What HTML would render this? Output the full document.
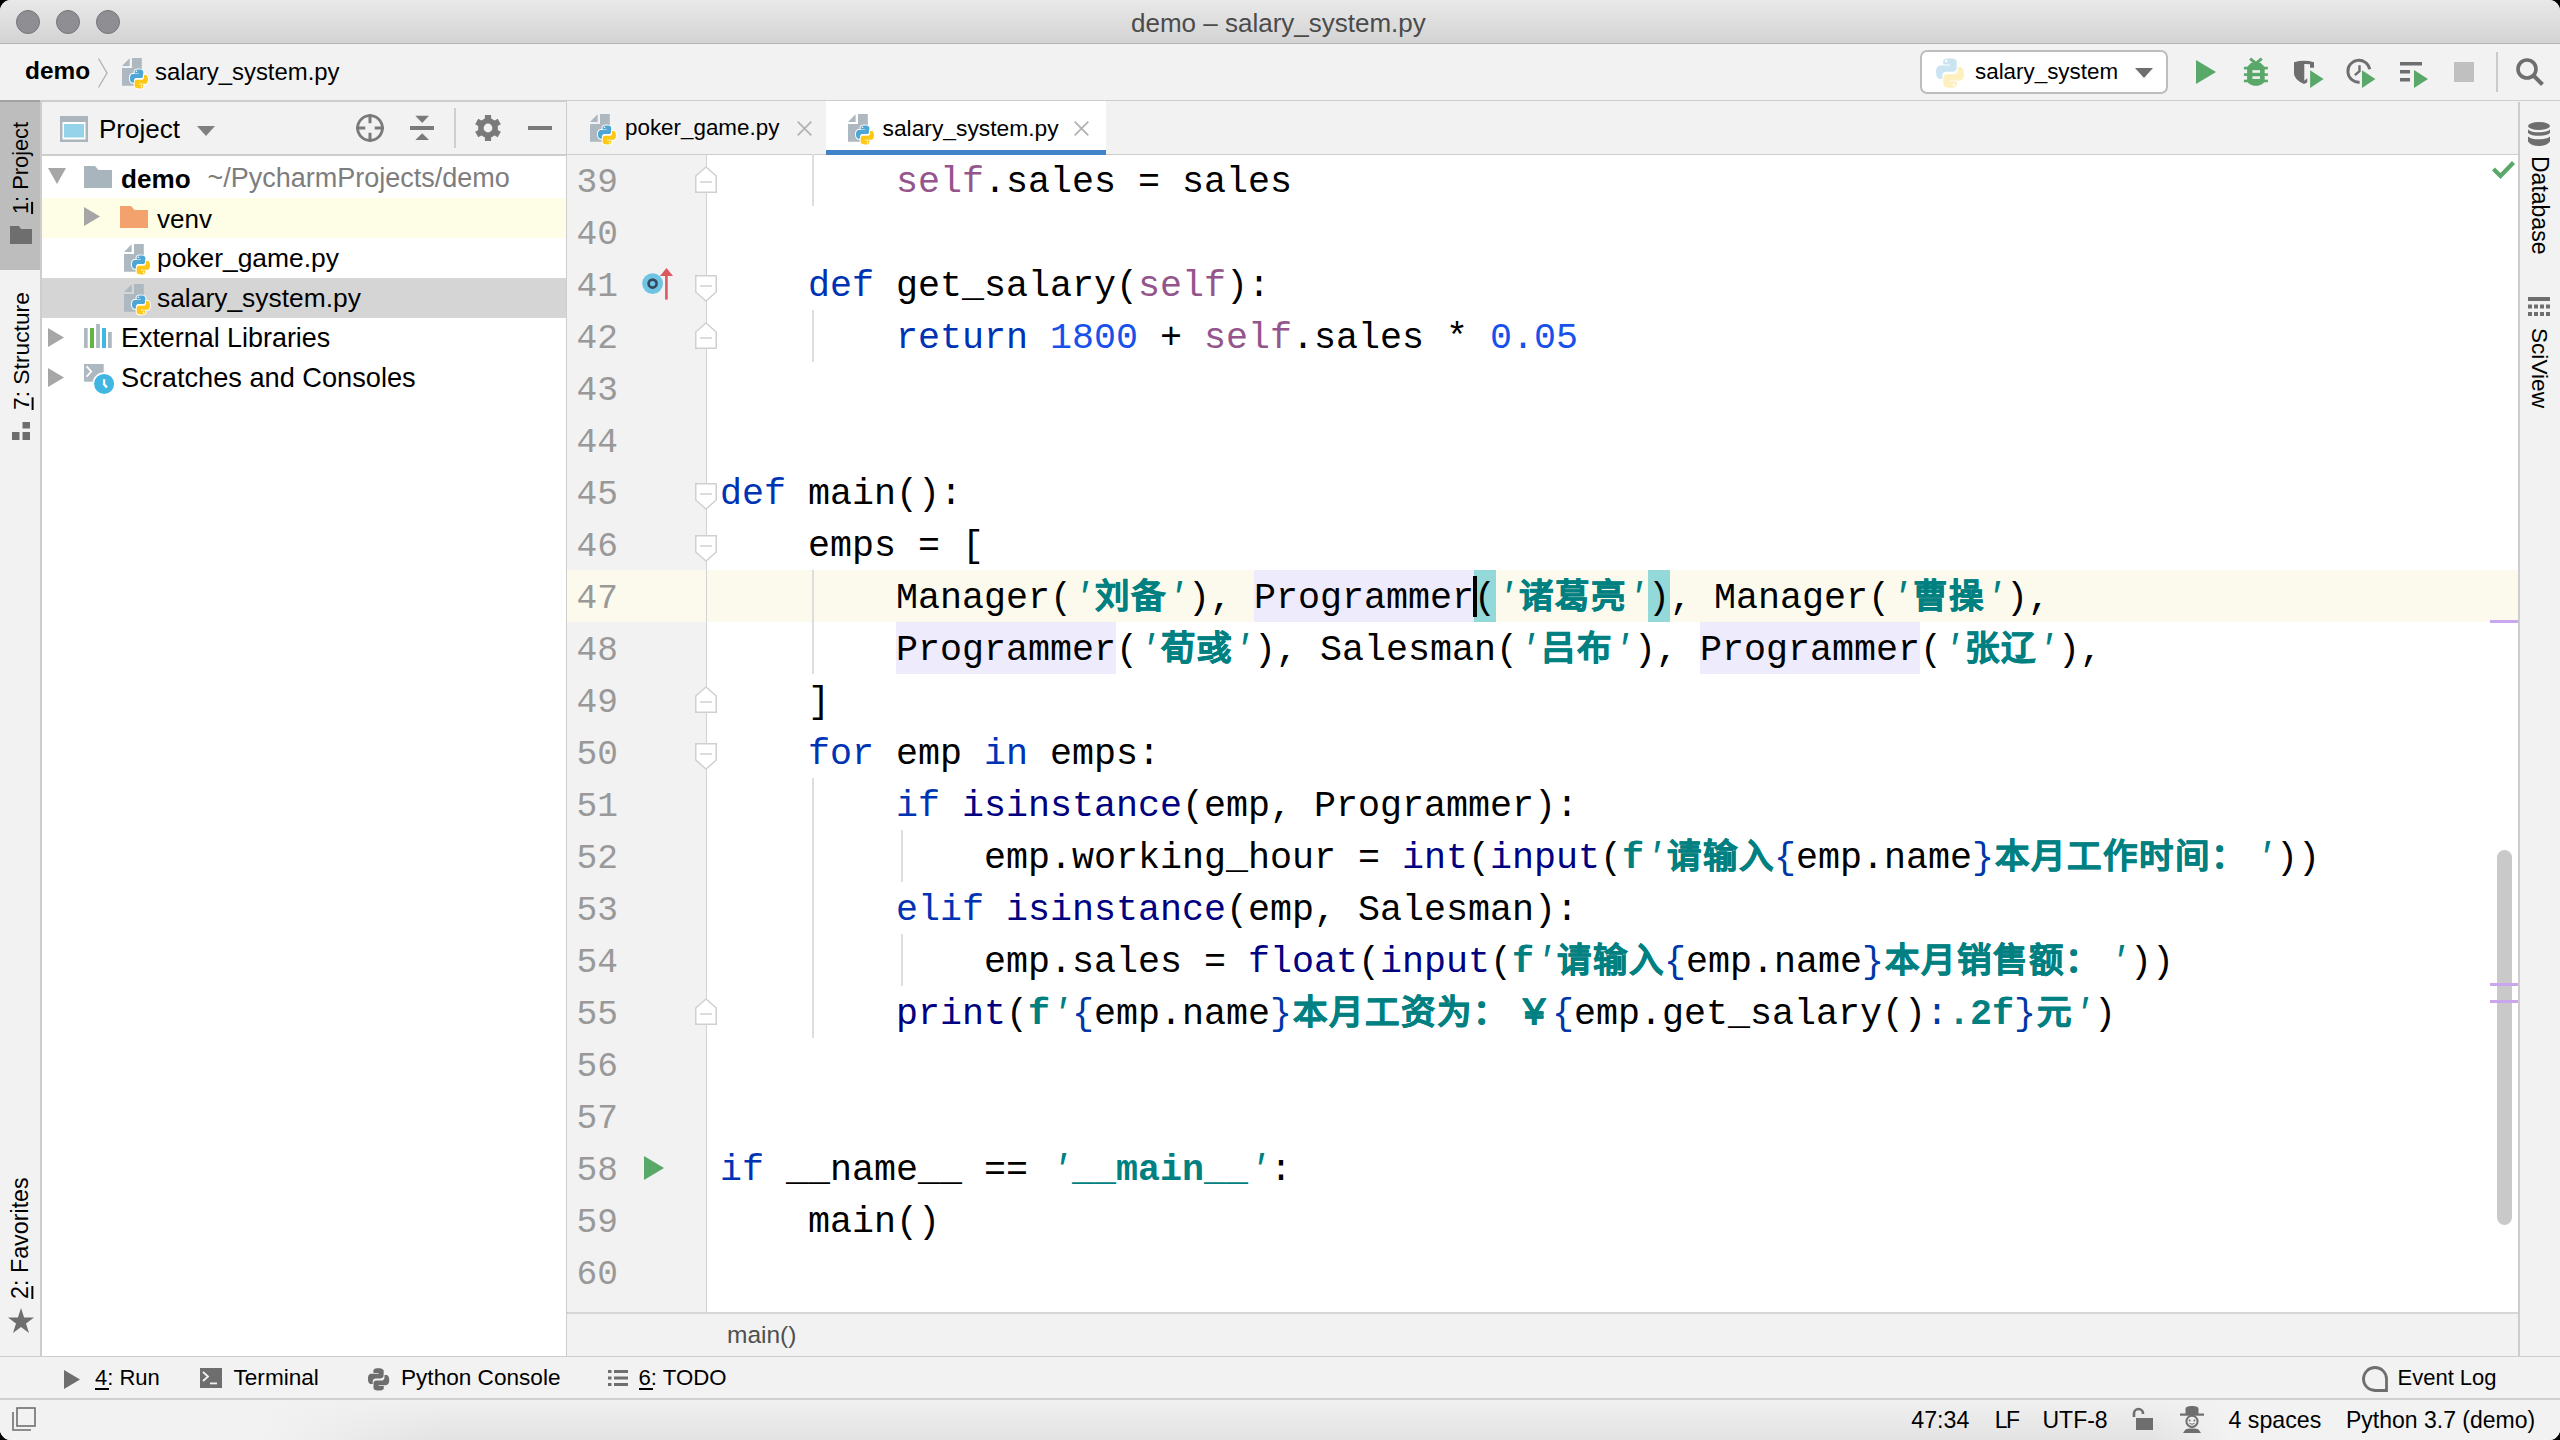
<!DOCTYPE html>
<html lang="zh-CN">
<head>
<meta charset="utf-8">
<style>
html,body{margin:0;padding:0;}
body{width:2560px;height:1440px;overflow:hidden;background:#000;position:relative;font-family:"Liberation Sans",sans-serif;}
#win{position:absolute;left:0;top:0;width:2560px;height:1440px;border-radius:11px;overflow:hidden;background:#f2f2f2;}
.a{position:absolute;}
.t{position:absolute;white-space:pre;line-height:1;}
svg{position:absolute;overflow:visible;}
.ln{position:absolute;left:540px;width:78px;text-align:right;font-family:"Liberation Mono",monospace;font-size:34.5px;color:#a0a0a0;line-height:1;white-space:pre;}
.cl{position:absolute;left:720px;font-family:"Liberation Mono",monospace;font-size:36.67px;color:#000;line-height:1;white-space:pre;}
.k{color:#0033b3;}
.b{color:#000080;}
.s{color:#008080;font-style:italic;}
.sb{color:#008080;font-weight:bold;}
.cj{color:#008080;font-weight:bold;font-size:34.5px;-webkit-text-stroke:0.6px #008080;}
.cj i{font-style:normal;display:inline-block;width:36px;text-align:center;}
.cj i.w{width:44px;text-align:left;padding-left:1px;box-sizing:border-box;}
.sf{color:#94558d;}
.n{color:#1750eb;}
.br{color:#0037a6;}
</style>
</head>
<body>
<div id="win">
<svg width="0" height="0" style="position:absolute">
<defs>
<g id="pylogo">
 <path id="pyb" d="M9.86 0.5C5.33 0.5 5.61 2.47 5.61 2.47L5.62 4.51H9.94V5.12H3.9C3.9 5.12 0.98 4.79 0.98 9.39C0.98 13.99 3.53 13.83 3.53 13.83H5.05V11.7C5.05 11.7 4.97 9.15 7.56 9.15H11.88C11.88 9.15 14.31 9.19 14.31 6.8V2.85C14.31 2.85 14.68 0.5 9.86 0.5Z" fill="#4ea6d6" stroke="#fff" stroke-width="2" paint-order="stroke"/>
 <path id="pyy" d="M10.14 19.5C14.67 19.5 14.39 17.53 14.39 17.53L14.38 15.49H10.06V14.88H16.1C16.1 14.88 19.02 15.21 19.02 10.61C19.02 6.01 16.47 6.17 16.47 6.17H14.95V8.3C14.95 8.3 15.03 10.85 12.44 10.85H8.12C8.12 10.85 5.69 10.81 5.69 13.2V17.15C5.69 17.15 5.32 19.5 10.14 19.5Z" fill="#fdc816" stroke="#fff" stroke-width="2" paint-order="stroke"/>
 <circle cx="7.5" cy="2.3" r="0.8" fill="#fff"/><circle cx="12.5" cy="17.7" r="0.8" fill="#fff"/>
</g>
<g id="pyfile">
 <path d="M0 8L7.6 0.3V8Z" fill="#adb8c0"/>
 <path d="M10 0H19.8V14H12V27.8H0V10H10Z" fill="#adb8c0"/>
 <use href="#pylogo" transform="translate(7 10.9)"/>
</g>
<g id="pygray">
 <path d="M9.86 0.5C5.33 0.5 5.61 2.47 5.61 2.47L5.62 4.51H9.94V5.12H3.9C3.9 5.12 0.98 4.79 0.98 9.39C0.98 13.99 3.53 13.83 3.53 13.83H5.05V11.7C5.05 11.7 4.97 9.15 7.56 9.15H11.88C11.88 9.15 14.31 9.19 14.31 6.8V2.85C14.31 2.85 14.68 0.5 9.86 0.5Z" fill="#6e6e6e"/>
 <path d="M10.14 19.5C14.67 19.5 14.39 17.53 14.39 17.53L14.38 15.49H10.06V14.88H16.1C16.1 14.88 19.02 15.21 19.02 10.61C19.02 6.01 16.47 6.17 16.47 6.17H14.95V8.3C14.95 8.3 15.03 10.85 12.44 10.85H8.12C8.12 10.85 5.69 10.81 5.69 13.2V17.15C5.69 17.15 5.32 19.5 10.14 19.5Z" fill="#6e6e6e" stroke="#f2f2f2" stroke-width="1" paint-order="stroke"/>
 
</g>
<g id="pyfaded">
 <path d="M9.86 0.5C5.33 0.5 5.61 2.47 5.61 2.47L5.62 4.51H9.94V5.12H3.9C3.9 5.12 0.98 4.79 0.98 9.39C0.98 13.99 3.53 13.83 3.53 13.83H5.05V11.7C5.05 11.7 4.97 9.15 7.56 9.15H11.88C11.88 9.15 14.31 9.19 14.31 6.8V2.85C14.31 2.85 14.68 0.5 9.86 0.5Z" fill="#cbe4f1"/>
 <path d="M10.14 19.5C14.67 19.5 14.39 17.53 14.39 17.53L14.38 15.49H10.06V14.88H16.1C16.1 14.88 19.02 15.21 19.02 10.61C19.02 6.01 16.47 6.17 16.47 6.17H14.95V8.3C14.95 8.3 15.03 10.85 12.44 10.85H8.12C8.12 10.85 5.69 10.81 5.69 13.2V17.15C5.69 17.15 5.32 19.5 10.14 19.5Z" fill="#fdefbe" stroke="#fff" stroke-width="0.8" paint-order="stroke"/>
 <circle cx="7.5" cy="2.3" r="0.8" fill="#fff"/><circle cx="12.5" cy="17.7" r="0.8" fill="#fff"/>
</g>
</defs>
</svg>

<div class="a" style="left:0px;top:0px;width:2560px;height:43px;background:linear-gradient(#e9e9e9,#d3d3d3);"></div>
<div class="a" style="left:0px;top:43px;width:2560px;height:1px;background:#b3b3b3;"></div>
<div class="a" style="left:16px;top:10px;width:22px;height:22px;border-radius:50%;background:#8f8e93;border:1px solid #76757a;"></div>
<div class="a" style="left:56px;top:10px;width:22px;height:22px;border-radius:50%;background:#8f8e93;border:1px solid #76757a;"></div>
<div class="a" style="left:96px;top:10px;width:22px;height:22px;border-radius:50%;background:#8f8e93;border:1px solid #76757a;"></div>
<div class="t" style="left:1131px;top:10.29px;font-family:'Liberation Sans';font-size:26px;color:#4b4b4b;font-weight:normal;">demo – salary_system.py</div>
<div class="a" style="left:0px;top:44px;width:2560px;height:56px;background:#f2f2f2;"></div>
<div class="a" style="left:0px;top:100px;width:2560px;height:2px;background:#cdcdcd;"></div>
<div class="t" style="left:25px;top:59.34px;font-family:'Liberation Sans';font-size:24.4px;color:#000;font-weight:bold;">demo</div>
<svg style="left:98px;top:58px" width="10" height="30" viewBox="0 0 10 30"><path d="M0.5 0.5L9 15L0.5 29.5" fill="none" stroke="#aab2b9" stroke-width="1.3"/></svg>
<svg style="left:122px;top:58px" width="26" height="30" viewBox="0 0 26 30"><use href="#pyfile"/></svg>
<div class="t" style="left:155px;top:59.76px;font-family:'Liberation Sans';font-size:23.9px;color:#000;font-weight:normal;">salary_system.py</div>
<div class="a" style="left:1920px;top:50px;width:244px;height:40px;border:2px solid #bdbdbd;border-radius:7px;background:#fff;"></div>
<svg style="left:1934px;top:57px" width="30" height="30" viewBox="0 0 30 30"><use href="#pyfaded" transform="translate(0.5 0.5) scale(1.55)"/></svg>
<div class="t" style="left:1975px;top:60.93px;font-family:'Liberation Sans';font-size:22.4px;color:#000;font-weight:normal;">salary_system</div>
<svg style="left:2135px;top:68px" width="18" height="10" viewBox="0 0 18 10"><path d="M0 0H18L9 10Z" fill="#6e6e6e"/></svg>
<svg style="left:2196px;top:60px" width="20" height="24" viewBox="0 0 20 24"><path d="M0 0L20 12L0 24Z" fill="#59a869"/></svg>
<svg style="left:2243px;top:58px" width="26" height="29" viewBox="0 0 26 29"><path d="M7.1 0.7L12.9 5.4L18.8 0.7" fill="none" stroke="#59a869" stroke-width="3"/><path d="M8.2 4.8H17.6L21.7 9V22C21.7 25.2 18 27.8 12.9 27.8C7.8 27.8 4.1 25.2 4.1 22V9Z" fill="#59a869"/><g fill="#59a869"><rect x="0.9" y="8.8" width="24" height="2.6"/><rect x="0.9" y="15.3" width="24" height="2.6"/><rect x="0.9" y="21.7" width="24" height="2.6"/></g><rect x="9.4" y="12.2" width="7.6" height="2.6" fill="#f2f2f2"/><rect x="9.4" y="18.3" width="7.6" height="2.6" fill="#f2f2f2"/></svg>
<svg style="left:2293px;top:59px" width="32" height="30" viewBox="0 0 32 30"><path d="M1 3.2Q11 0.4 21 3.2V8.8H17V5.3Q14 4.8 11.3 5V21.8L14.3 19.3V23.3Q12.5 24.5 11 25Q1 20.5 1 14.5Z" fill="#6e6e6e"/><path d="M17.1 11.2V29L30.6 19.9Z" fill="#59a869" stroke="#f2f2f2" stroke-width="1.5" paint-order="stroke"/></svg>
<svg style="left:2345px;top:58px" width="32" height="31" viewBox="0 0 32 31"><path d="M24.7 11.3A11 11 0 1 0 14.6 24.2" fill="none" stroke="#6e6e6e" stroke-width="2.9"/><path d="M14.5 7.2V13.3L9.9 17.1" fill="none" stroke="#6e6e6e" stroke-width="2.4"/><path d="M17 12.2V30L30.4 21.1Z" fill="#59a869" stroke="#f2f2f2" stroke-width="1.5" paint-order="stroke"/></svg>
<svg style="left:2400px;top:62px" width="28" height="26" viewBox="0 0 28 26"><rect x="0" y="0" width="22" height="3.5" fill="#6e6e6e"/><rect x="0" y="8" width="10" height="3.5" fill="#6e6e6e"/><rect x="0" y="16" width="10" height="3.5" fill="#6e6e6e"/>
<path d="M14 8V26L28 17Z" fill="#59a869"/></svg>
<div class="a" style="left:2454px;top:62px;width:20px;height:20px;background:#c0c0c0;"></div>
<div class="a" style="left:2496px;top:52px;width:2px;height:40px;background:#cbcbcb;"></div>
<svg style="left:2516px;top:58px" width="28" height="28" viewBox="0 0 28 28"><circle cx="11" cy="11" r="9" fill="none" stroke="#6e6e6e" stroke-width="3.6"/><path d="M17.5 17.5L26.5 26.5" stroke="#6e6e6e" stroke-width="4"/></svg>
<div class="a" style="left:0px;top:102px;width:40px;height:1254px;background:#f2f2f2;"></div>
<div class="a" style="left:40px;top:102px;width:2px;height:1254px;background:#cdcdcd;"></div>
<div class="a" style="left:0px;top:102px;width:40px;height:168px;background:#bdbdbd;"></div>
<div class="a" style="left:0px;top:100px;width:40px;height:2px;background:#a3a3a3;"></div>
<div class="t" style="left:21px;top:214px;font-size:21.8px;color:#000;transform-origin:0 0;transform:rotate(-90deg) translate(0,-50%);line-height:1;"><u style="text-decoration-thickness:1.5px;text-underline-offset:3px">1</u>: Project</div>
<svg style="left:10px;top:226px" width="22" height="18" viewBox="0 0 22 18"><path d="M0 0H9L11 3H22V18H0Z" fill="#6e6e6e"/></svg>
<div class="t" style="left:21px;top:410px;font-size:22.8px;color:#000;transform-origin:0 0;transform:rotate(-90deg) translate(0,-50%);line-height:1;"><u style="text-decoration-thickness:1.5px;text-underline-offset:3px">7</u>: Structure</div>
<svg style="left:12px;top:422px" width="18" height="18" viewBox="0 0 18 18"><rect x="10.5" y="0" width="7.5" height="6.5" fill="#6e6e6e"/><rect x="0" y="10" width="7.5" height="8" fill="#6e6e6e"/><rect x="10.5" y="10" width="7.5" height="8" fill="#6e6e6e"/></svg>
<div class="t" style="left:21px;top:1299px;font-size:23.3px;color:#000;transform-origin:0 0;transform:rotate(-90deg) translate(0,-50%);line-height:1;"><u style="text-decoration-thickness:1.5px;text-underline-offset:3px">2</u>: Favorites</div>
<svg style="left:8px;top:1308px" width="26" height="25" viewBox="0 0 26 25"><path d="M13 0L16.1 9.5H26L18 15.4L21 25L13 19.1L5 25L8 15.4L0 9.5H9.9Z" fill="#6e6e6e"/></svg>
<div class="a" style="left:42px;top:102px;width:524px;height:52px;background:#f2f2f2;"></div>
<div class="a" style="left:42px;top:154px;width:524px;height:2px;background:#cdcdcd;"></div>
<div class="a" style="left:42px;top:156px;width:524px;height:1200px;background:#ffffff;"></div>
<div class="a" style="left:566px;top:102px;width:2px;height:1254px;background:#cdcdcd;"></div>
<svg style="left:60px;top:116px" width="28" height="26" viewBox="0 0 28 26"><rect x="0" y="0" width="28" height="26" fill="#aab5bd"/><rect x="2.5" y="6" width="23" height="17.5" fill="#fff"/><rect x="4" y="8" width="20" height="13.5" fill="#94d3ea"/></svg>
<div class="t" style="left:99px;top:115.99px;font-family:'Liberation Sans';font-size:26px;color:#000;font-weight:normal;">Project</div>
<svg style="left:197px;top:126px" width="18" height="10" viewBox="0 0 18 10"><path d="M0 0H18L9 10Z" fill="#808080"/></svg>
<svg style="left:356px;top:114px" width="28" height="28" viewBox="0 0 28 28"><circle cx="14" cy="14" r="12.4" fill="none" stroke="#7a7a7a" stroke-width="2.8"/><path d="M14 0V9.3M14 18.7V28M0 14H9.3M18.7 14H28" stroke="#7a7a7a" stroke-width="3"/></svg>
<svg style="left:410px;top:115px" width="24" height="25" viewBox="0 0 24 25"><path d="M5.3 0.7H19L12.2 7.9Z" fill="#7a7a7a"/><rect x="0" y="11" width="24" height="4" fill="#7a7a7a"/><path d="M5.3 24.9H19L12.2 18.2Z" fill="#7a7a7a"/></svg>
<div class="a" style="left:454px;top:108px;width:2px;height:40px;background:#cfcfcf;"></div>
<svg style="left:475px;top:115px" width="26" height="26" viewBox="0 0 26 26"><g transform="translate(13 13)" fill="#7a7a7a"><circle r="10"/><rect x="-3.1" y="-13" width="6.2" height="6" transform="rotate(0)"/><rect x="-3.1" y="-13" width="6.2" height="6" transform="rotate(60)"/><rect x="-3.1" y="-13" width="6.2" height="6" transform="rotate(120)"/><rect x="-3.1" y="-13" width="6.2" height="6" transform="rotate(180)"/><rect x="-3.1" y="-13" width="6.2" height="6" transform="rotate(240)"/><rect x="-3.1" y="-13" width="6.2" height="6" transform="rotate(300)"/></g><circle cx="13" cy="13" r="4.4" fill="#f2f2f2"/></svg>
<div class="a" style="left:528px;top:126px;width:24px;height:4px;background:#7a7a7a;"></div>
<div class="a" style="left:42px;top:198px;width:524px;height:40px;background:#fefee6;"></div>
<div class="a" style="left:42px;top:278px;width:524px;height:40px;background:#d5d5d5;"></div>
<svg style="left:48px;top:168px" width="18" height="16" viewBox="0 0 18 16"><path d="M0 0H18L9 16Z" fill="#a6a6a6"/></svg>
<svg style="left:84px;top:166px" width="28" height="22" viewBox="0 0 28 22"><path d="M0 0H11L14.5 4H28V22H0Z" fill="#a9b5bd"/></svg>
<div class="t" style="left:121px;top:165.90px;font-family:'Liberation Sans';font-size:26.1px;color:#000;font-weight:bold;">demo</div>
<div class="t" style="left:207.5px;top:165.14px;font-family:'Liberation Sans';font-size:27.0px;color:#7d7d7d;font-weight:normal;">~/PycharmProjects/demo</div>
<svg style="left:84px;top:207px" width="16" height="19" viewBox="0 0 16 19"><path d="M0 0V19L16 9.5Z" fill="#a6a6a6"/></svg>
<svg style="left:120px;top:206px" width="28" height="22" viewBox="0 0 28 22"><path d="M0 0H11L14.5 4H28V22H0Z" fill="#f3a26d"/></svg>
<div class="t" style="left:157px;top:205.59px;font-family:'Liberation Sans';font-size:26.0px;color:#000;font-weight:normal;">venv</div>
<svg style="left:124px;top:244px" width="26" height="30" viewBox="0 0 26 30"><use href="#pyfile"/></svg>
<div class="t" style="left:157px;top:244.65px;font-family:'Liberation Sans';font-size:26.4px;color:#000;font-weight:normal;">poker_game.py</div>
<svg style="left:124px;top:284px" width="26" height="30" viewBox="0 0 26 30"><use href="#pyfile"/></svg>
<div class="t" style="left:157px;top:284.65px;font-family:'Liberation Sans';font-size:26.4px;color:#000;font-weight:normal;">salary_system.py</div>
<svg style="left:48px;top:328px" width="16" height="19" viewBox="0 0 16 19"><path d="M0 0V19L16 9.5Z" fill="#a6a6a6"/></svg>
<svg style="left:84px;top:324px" width="28" height="24" viewBox="0 0 28 24"><rect x="0" y="4" width="3.7" height="20" fill="#adb8c0"/><rect x="6" y="4" width="4" height="20" fill="#62b543"/><rect x="12.1" y="0" width="3.8" height="24" fill="#adb8c0"/><rect x="18" y="4" width="4" height="20" fill="#40b6e0"/><rect x="24" y="8" width="3.8" height="16" fill="#adb8c0"/></svg>
<div class="t" style="left:121px;top:325.22px;font-family:'Liberation Sans';font-size:26.9px;color:#000;font-weight:normal;">External Libraries</div>
<svg style="left:48px;top:368px" width="16" height="19" viewBox="0 0 16 19"><path d="M0 0V19L16 9.5Z" fill="#a6a6a6"/></svg>
<svg style="left:84px;top:364px" width="30" height="30" viewBox="0 0 30 30"><rect x="0" y="0" width="19.7" height="17.7" fill="#adb8c0"/><circle cx="20.1" cy="19.9" r="11.6" fill="#fff"/><path d="M2.6 2.3L7.2 7.5L2.6 12.7" fill="none" stroke="#fff" stroke-width="1.8"/><circle cx="20.1" cy="19.9" r="10" fill="#40b6e0"/><path d="M20.1 15.2V20.3L22.9 23.5" fill="none" stroke="#fff" stroke-width="2.3"/></svg>
<div class="t" style="left:121px;top:364.27px;font-family:'Liberation Sans';font-size:27.2px;color:#000;font-weight:normal;">Scratches and Consoles</div>
<div class="a" style="left:567px;top:101px;width:1952px;height:53px;background:#f2f2f2;"></div>
<div class="a" style="left:568px;top:154px;width:1950px;height:2px;background:#cdcdcd;"></div>
<div class="a" style="left:826px;top:101px;width:280px;height:54px;background:#ffffff;"></div>
<div class="a" style="left:826px;top:150px;width:280px;height:5px;background:#4083c9;"></div>
<svg style="left:590px;top:114px" width="26" height="30" viewBox="0 0 26 30"><use href="#pyfile"/></svg>
<div class="t" style="left:625px;top:117.03px;font-family:'Liberation Sans';font-size:22.4px;color:#000;font-weight:normal;">poker_game.py</div>
<svg style="left:797px;top:121px" width="15" height="15" viewBox="0 0 15 15"><path d="M0.7 0.7L14.3 14.3M14.3 0.7L0.7 14.3" stroke="#b3b3b3" stroke-width="1.8"/></svg>
<svg style="left:848px;top:114px" width="26" height="30" viewBox="0 0 26 30"><use href="#pyfile"/></svg>
<div class="t" style="left:882.5px;top:116.90px;font-family:'Liberation Sans';font-size:22.8px;color:#000;font-weight:normal;">salary_system.py</div>
<svg style="left:1074px;top:121px" width="15" height="15" viewBox="0 0 15 15"><path d="M0.7 0.7L14.3 14.3M14.3 0.7L0.7 14.3" stroke="#b3b3b3" stroke-width="1.8"/></svg>
<div class="a" style="left:567px;top:155px;width:140px;height:1157px;background:#f2f2f2;"></div>
<div class="a" style="left:707px;top:155px;width:1812px;height:1157px;background:#ffffff;"></div>
<div class="a" style="left:567px;top:570px;width:1952px;height:52px;background:#fcfaed;"></div>
<div class="a" style="left:705.5px;top:155px;width:1.5px;height:1157px;background:#d3d3d3;"></div>
<div class="a" style="left:1254px;top:570px;width:220px;height:52px;background:#edebfc;"></div>
<div class="a" style="left:896px;top:622px;width:220px;height:52px;background:#edebfc;"></div>
<div class="a" style="left:1700px;top:622px;width:220px;height:52px;background:#edebfc;"></div>
<div class="a" style="left:1474px;top:570px;width:22px;height:52px;background:#93d9d9;"></div>
<div class="a" style="left:1648px;top:570px;width:22px;height:52px;background:#93d9d9;"></div>
<div class="a" style="left:812px;top:154px;width:1.5px;height:52px;background:#dedede;"></div>
<div class="a" style="left:812px;top:310px;width:1.5px;height:52px;background:#dedede;"></div>
<div class="a" style="left:812px;top:570px;width:1.5px;height:104px;background:#dedede;"></div>
<div class="a" style="left:812px;top:778px;width:1.5px;height:260px;background:#dedede;"></div>
<div class="a" style="left:901px;top:830px;width:1.5px;height:52px;background:#dedede;"></div>
<div class="a" style="left:901px;top:934px;width:1.5px;height:52px;background:#dedede;"></div>
<div class="ln" style="top:166.17px;color:#999999">39</div>
<div class="ln" style="top:218.17px;color:#999999">40</div>
<div class="ln" style="top:270.17px;color:#999999">41</div>
<div class="ln" style="top:322.17px;color:#999999">42</div>
<div class="ln" style="top:374.17px;color:#999999">43</div>
<div class="ln" style="top:426.17px;color:#999999">44</div>
<div class="ln" style="top:478.17px;color:#999999">45</div>
<div class="ln" style="top:530.17px;color:#999999">46</div>
<div class="ln" style="top:582.17px;color:#999999">47</div>
<div class="ln" style="top:634.17px;color:#999999">48</div>
<div class="ln" style="top:686.17px;color:#999999">49</div>
<div class="ln" style="top:738.17px;color:#999999">50</div>
<div class="ln" style="top:790.17px;color:#999999">51</div>
<div class="ln" style="top:842.17px;color:#999999">52</div>
<div class="ln" style="top:894.17px;color:#999999">53</div>
<div class="ln" style="top:946.17px;color:#999999">54</div>
<div class="ln" style="top:998.17px;color:#999999">55</div>
<div class="ln" style="top:1050.17px;color:#999999">56</div>
<div class="ln" style="top:1102.17px;color:#999999">57</div>
<div class="ln" style="top:1154.17px;color:#999999">58</div>
<div class="ln" style="top:1206.17px;color:#999999">59</div>
<div class="ln" style="top:1258.17px;color:#999999">60</div>
<div class="cl" style="top:163.51px">        <span class="sf">self</span>.sales = sales</div>
<div class="cl" style="top:267.51px">    <span class="k">def</span> get_salary(<span class="sf">self</span>):</div>
<div class="cl" style="top:319.51px">        <span class="k">return</span> <span class="n">1800</span> + <span class="sf">self</span>.sales * <span class="n">0.05</span></div>
<div class="cl" style="top:475.51px"><span class="k">def</span> main():</div>
<div class="cl" style="top:527.51px">    emps = [</div>
<div class="cl" style="top:579.51px">        Manager(<span class="s">'</span><span class="cj"><i>刘</i><i>备</i></span><span class="s">'</span>), Programmer(<span class="s">'</span><span class="cj"><i>诸</i><i>葛</i><i>亮</i></span><span class="s">'</span>), Manager(<span class="s">'</span><span class="cj"><i>曹</i><i>操</i></span><span class="s">'</span>),</div>
<div class="cl" style="top:631.51px">        Programmer(<span class="s">'</span><span class="cj"><i>荀</i><i>彧</i></span><span class="s">'</span>), Salesman(<span class="s">'</span><span class="cj"><i>吕</i><i>布</i></span><span class="s">'</span>), Programmer(<span class="s">'</span><span class="cj"><i>张</i><i>辽</i></span><span class="s">'</span>),</div>
<div class="cl" style="top:683.51px">    ]</div>
<div class="cl" style="top:735.51px">    <span class="k">for</span> emp <span class="k">in</span> emps:</div>
<div class="cl" style="top:787.51px">        <span class="k">if</span> <span class="b">isinstance</span>(emp, Programmer):</div>
<div class="cl" style="top:839.51px">            emp.working_hour = <span class="b">int</span>(<span class="b">input</span>(<span class="sb">f</span><span class="s">'</span><span class="cj"><i>请</i><i>输</i><i>入</i></span><span class="br">{</span>emp.name<span class="br">}</span><span class="cj"><i>本</i><i>月</i><i>工</i><i>作</i><i>时</i><i>间</i></span><span class="cj"><i class="w">：</i></span><span class="s">'</span>))</div>
<div class="cl" style="top:891.51px">        <span class="k">elif</span> <span class="b">isinstance</span>(emp, Salesman):</div>
<div class="cl" style="top:943.51px">            emp.sales = <span class="b">float</span>(<span class="b">input</span>(<span class="sb">f</span><span class="s">'</span><span class="cj"><i>请</i><i>输</i><i>入</i></span><span class="br">{</span>emp.name<span class="br">}</span><span class="cj"><i>本</i><i>月</i><i>销</i><i>售</i><i>额</i></span><span class="cj"><i class="w">：</i></span><span class="s">'</span>))</div>
<div class="cl" style="top:995.51px">        <span class="b">print</span>(<span class="sb">f</span><span class="s">'</span><span class="br">{</span>emp.name<span class="br">}</span><span class="cj"><i>本</i><i>月</i><i>工</i><i>资</i><i>为</i></span><span class="cj"><i class="w">：</i></span><span class="cj"><i>￥</i></span><span class="br">{</span>emp.get_salary()<span class="br">:</span><span class="sb">.2f</span><span class="br">}</span><span class="cj"><i>元</i></span><span class="s">'</span>)</div>
<div class="cl" style="top:1151.51px"><span class="k">if</span> __name__ == <span class="s">'</span><span class="sb">__main__</span><span class="s">'</span>:</div>
<div class="cl" style="top:1203.51px">    main()</div>
<div class="a" style="left:1473px;top:576px;width:3.5px;height:41px;background:#000;"></div>
<svg style="left:695px;top:275px" width="22" height="27" viewBox="0 0 22 27"><path d="M0.75 0.75H21.25V17L11 26L0.75 17Z" fill="#fff" stroke="#d0d0d0" stroke-width="1.5"/><path d="M5 11H17" stroke="#d0d0d0" stroke-width="1.5"/></svg>
<svg style="left:695px;top:483px" width="22" height="27" viewBox="0 0 22 27"><path d="M0.75 0.75H21.25V17L11 26L0.75 17Z" fill="#fff" stroke="#d0d0d0" stroke-width="1.5"/><path d="M5 11H17" stroke="#d0d0d0" stroke-width="1.5"/></svg>
<svg style="left:695px;top:535px" width="22" height="27" viewBox="0 0 22 27"><path d="M0.75 0.75H21.25V17L11 26L0.75 17Z" fill="#fff" stroke="#d0d0d0" stroke-width="1.5"/><path d="M5 11H17" stroke="#d0d0d0" stroke-width="1.5"/></svg>
<svg style="left:695px;top:743px" width="22" height="27" viewBox="0 0 22 27"><path d="M0.75 0.75H21.25V17L11 26L0.75 17Z" fill="#fff" stroke="#d0d0d0" stroke-width="1.5"/><path d="M5 11H17" stroke="#d0d0d0" stroke-width="1.5"/></svg>
<svg style="left:695px;top:166px" width="22" height="27" viewBox="0 0 22 27"><path d="M0.75 26.25H21.25V10L11 1L0.75 10Z" fill="#fff" stroke="#d0d0d0" stroke-width="1.5"/><path d="M5 16H17" stroke="#d0d0d0" stroke-width="1.5"/></svg>
<svg style="left:695px;top:322px" width="22" height="27" viewBox="0 0 22 27"><path d="M0.75 26.25H21.25V10L11 1L0.75 10Z" fill="#fff" stroke="#d0d0d0" stroke-width="1.5"/><path d="M5 16H17" stroke="#d0d0d0" stroke-width="1.5"/></svg>
<svg style="left:695px;top:686px" width="22" height="27" viewBox="0 0 22 27"><path d="M0.75 26.25H21.25V10L11 1L0.75 10Z" fill="#fff" stroke="#d0d0d0" stroke-width="1.5"/><path d="M5 16H17" stroke="#d0d0d0" stroke-width="1.5"/></svg>
<svg style="left:695px;top:998px" width="22" height="27" viewBox="0 0 22 27"><path d="M0.75 26.25H21.25V10L11 1L0.75 10Z" fill="#fff" stroke="#d0d0d0" stroke-width="1.5"/><path d="M5 16H17" stroke="#d0d0d0" stroke-width="1.5"/></svg>
<svg style="left:642px;top:273px" width="32" height="28" viewBox="0 0 32 28"><circle cx="10.6" cy="10.6" r="10.4" fill="#6ec4e3"/><circle cx="10.6" cy="10.6" r="4" fill="none" stroke="#34495e" stroke-width="2.6"/><path d="M24.4 2.6V26.6" stroke="#db5860" stroke-width="2.6"/><path d="M18 3H31L24.5 -5Z" fill="#db5860"/></svg>
<svg style="left:644px;top:1156px" width="20" height="24" viewBox="0 0 20 24"><path d="M0 0L20 12L0 24Z" fill="#59a869"/></svg>
<svg style="left:2492px;top:160px" width="23" height="18" viewBox="0 0 23 18"><path d="M1.5 9L8.5 16L21.5 2.5" fill="none" stroke="#59a869" stroke-width="4.2"/></svg>
<div class="a" style="left:2497px;top:850px;width:15px;height:375px;border-radius:8px;background:#c9c9c9;"></div>
<div class="a" style="left:2490px;top:620px;width:28px;height:2.5px;background:#c9a6ee;"></div>
<div class="a" style="left:2490px;top:983px;width:28px;height:2.5px;background:#c9a6ee;"></div>
<div class="a" style="left:2490px;top:1000px;width:28px;height:2.5px;background:#c9a6ee;"></div>
<div class="a" style="left:568px;top:1312px;width:1950px;height:2px;background:#d7d7d7;"></div>
<div class="a" style="left:567px;top:1314px;width:1952px;height:42px;background:#f2f2f2;"></div>
<div class="t" style="left:727px;top:1323.01px;font-family:'Liberation Sans';font-size:24.5px;color:#505050;font-weight:normal;">main()</div>
<div class="a" style="left:2519px;top:101px;width:41px;height:1255px;background:#f2f2f2;"></div>
<div class="a" style="left:2518px;top:102px;width:2px;height:1254px;background:#cdcdcd;"></div>
<svg style="left:2528px;top:122px" width="22" height="24" viewBox="0 0 22 24"><g fill="#6e6e6e"><ellipse cx="11" cy="4" rx="11" ry="4"/><path d="M0 7.5C2 9.5 6 10.3 11 10.3C16 10.3 20 9.5 22 7.5V11C20 13 16 13.8 11 13.8C6 13.8 2 13 0 11Z"/><path d="M0 14.5C2 16.5 6 17.3 11 17.3C16 17.3 20 16.5 22 14.5V19.5C20 22.5 16 24 11 24C6 24 2 22.5 0 19.5Z"/></g></svg>
<div class="t" style="left:2539px;top:155.5px;font-size:23px;color:#000;transform-origin:0 0;transform:rotate(90deg) translate(0,-50%);line-height:1;">Database</div>
<svg style="left:2528px;top:297px" width="22" height="19" viewBox="0 0 22 19"><g fill="#6e6e6e"><rect x="0" y="0" width="22" height="4"/><rect x="0" y="7.5" width="4" height="4"/><rect x="6" y="7.5" width="4" height="4"/><rect x="12" y="7.5" width="4" height="4"/><rect x="18" y="7.5" width="4" height="4"/><rect x="0" y="15" width="4" height="4"/><rect x="6" y="15" width="4" height="4"/><rect x="12" y="15" width="4" height="4"/><rect x="18" y="15" width="4" height="4"/></g></svg>
<div class="t" style="left:2539px;top:327.5px;font-size:22.6px;color:#000;transform-origin:0 0;transform:rotate(90deg) translate(0,-50%);line-height:1;">SciView</div>
<div class="a" style="left:0px;top:1356px;width:2560px;height:2px;background:#cdcdcd;"></div>
<div class="a" style="left:0px;top:1357px;width:2560px;height:41px;background:#f2f2f2;"></div>
<div class="a" style="left:0px;top:1398px;width:2560px;height:2px;background:#d0d0d0;"></div>
<svg style="left:64px;top:1370px" width="16" height="19" viewBox="0 0 16 19"><path d="M0 0V19L16 9.5Z" fill="#6e6e6e"/></svg>
<div class="t" style="left:95px;top:1367.17px;font-family:'Liberation Sans';font-size:22px;color:#000;font-weight:normal;">4: Run</div>
<div class="a" style="left:95px;top:1388.2px;width:14px;height:2px;background:#000;"></div>
<svg style="left:200px;top:1368px" width="22" height="20" viewBox="0 0 22 20"><rect x="0" y="0" width="22" height="20" fill="#6e6e6e"/><path d="M3 4L8 8.5L3 13" fill="none" stroke="#f2f2f2" stroke-width="1.8"/><rect x="10" y="14.5" width="7" height="1.8" fill="#f2f2f2"/></svg>
<div class="t" style="left:233.5px;top:1366.66px;font-family:'Liberation Sans';font-size:22.6px;color:#000;font-weight:normal;">Terminal</div>
<svg style="left:366px;top:1367px" width="24" height="24" viewBox="0 0 24 24"><use href="#pygray" transform="translate(0.8 0.6) scale(1.18)"/></svg>
<div class="t" style="left:401px;top:1366.66px;font-family:'Liberation Sans';font-size:22.6px;color:#000;font-weight:normal;">Python Console</div>
<svg style="left:608px;top:1370px" width="20" height="16" viewBox="0 0 20 16"><g fill="#6e6e6e"><rect x="0" y="0" width="3.5" height="3"/><rect x="6" y="0" width="14" height="3"/><rect x="0" y="6.5" width="3.5" height="3"/><rect x="6" y="6.5" width="14" height="3"/><rect x="0" y="13" width="3.5" height="3"/><rect x="6" y="13" width="14" height="3"/></g></svg>
<div class="t" style="left:638.5px;top:1367.00px;font-family:'Liberation Sans';font-size:22.2px;color:#000;font-weight:normal;">6: TODO</div>
<div class="a" style="left:638.5px;top:1388.2px;width:14px;height:2px;background:#000;"></div>
<svg style="left:2362px;top:1366px" width="26" height="26" viewBox="0 0 26 26"><path d="M24.5 24.5H13A11.5 11.5 0 1 1 24.5 13Z" fill="none" stroke="#6e6e6e" stroke-width="2.8"/></svg>
<div class="t" style="left:2397.5px;top:1367.27px;font-family:'Liberation Sans';font-size:22px;color:#000;font-weight:normal;">Event Log</div>
<div class="a" style="left:0px;top:1400px;width:2560px;height:40px;background:linear-gradient(90deg,#f2f2f2 0px,#f2f2f2 260px,rgba(242,242,242,0) 440px,rgba(242,242,242,0) 2150px,#f2f2f2 2230px),linear-gradient(#f0f0f0,#e3e3e3);"></div>
<svg style="left:12px;top:1407px" width="24" height="24" viewBox="0 0 24 24"><path d="M1 5V23H19" fill="none" stroke="#6e6e6e" stroke-width="1.6"/><rect x="5" y="1" width="18" height="18" fill="none" stroke="#6e6e6e" stroke-width="1.6"/></svg>
<div class="t" style="left:1911.3px;top:1408.76px;font-family:'Liberation Sans';font-size:23.2px;color:#000;font-weight:normal;">47:34</div>
<div class="t" style="left:1994.7px;top:1408.93px;font-family:'Liberation Sans';font-size:23px;color:#000;font-weight:normal;letter-spacing:-1.6px;">LF</div>
<div class="t" style="left:2042.5px;top:1408.93px;font-family:'Liberation Sans';font-size:23px;color:#000;font-weight:normal;">UTF-8</div>
<svg style="left:2130px;top:1408px" width="23" height="22" viewBox="0 0 23 22"><path d="M4 9V5.5A4.5 4.5 0 0 1 13 5.5V6" fill="none" stroke="#6e6e6e" stroke-width="2.6"/><rect x="6" y="10" width="17" height="12" fill="#6e6e6e"/></svg>
<svg style="left:2180px;top:1406px" width="24" height="27" viewBox="0 0 24 27"><g fill="#6e6e6e"><path d="M5.5 8V3C5.5 1 7.5 0 12 0C16.5 0 18.5 1 18.5 3V8Z"/><rect x="0" y="7.5" width="24" height="2.2"/><path d="M3 27L5.5 23.5C7 22.8 9 22.5 12 22.5C15 22.5 17 22.8 18.5 23.5L21 27Z"/></g><circle cx="12" cy="15.3" r="5.6" fill="none" stroke="#6e6e6e" stroke-width="2"/><circle cx="9.6" cy="14.6" r="1" fill="#6e6e6e"/><circle cx="14.4" cy="14.6" r="1" fill="#6e6e6e"/><path d="M9.5 17.3Q12 19.3 14.5 17.3" fill="none" stroke="#6e6e6e" stroke-width="1"/></svg>
<div class="t" style="left:2228.5px;top:1408.76px;font-family:'Liberation Sans';font-size:23.2px;color:#000;font-weight:normal;">4 spaces</div>
<div class="t" style="left:2346px;top:1408.93px;font-family:'Liberation Sans';font-size:23px;color:#000;font-weight:normal;">Python 3.7 (demo)</div>
</div>
</body>
</html>
